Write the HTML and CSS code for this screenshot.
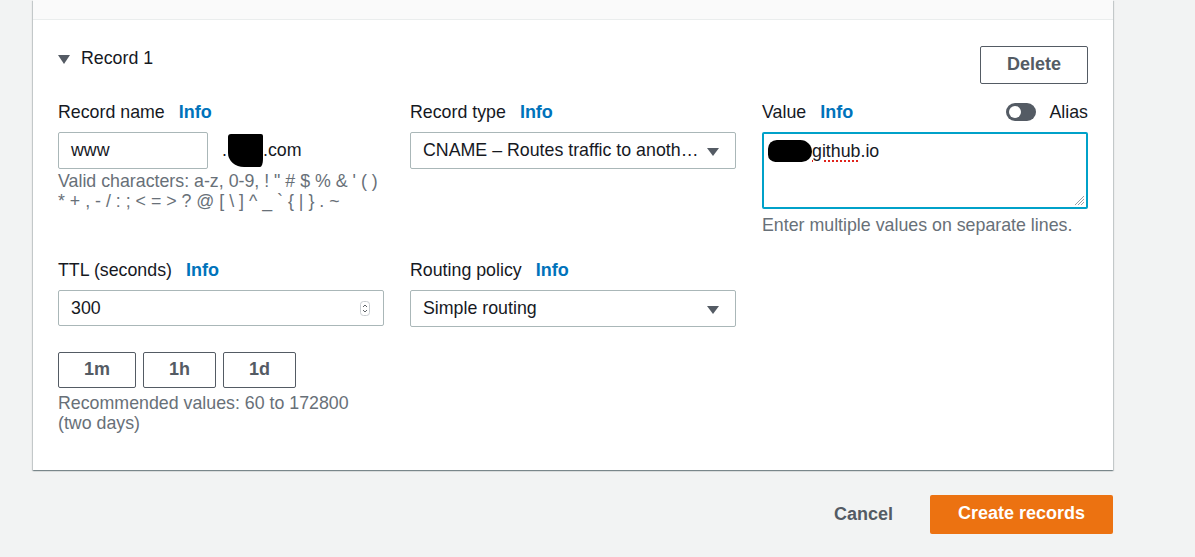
FILE: index.html
```html
<!DOCTYPE html>
<html lang="en">
<head>
<meta charset="utf-8">
<title>Create records</title>
<link rel="stylesheet" href="styles.css">
</head>
<body>
<div class="page">
  <section class="card">
    <div class="card-top"></div>
    <div class="record">
      <div class="record-head">
        <div class="expander"><span class="caret"></span><span class="record-title">Record 1</span></div>
        <button class="btn btn-delete">Delete</button>
      </div>

      <div class="fields">
        <div class="field">
          <div class="label-row"><span class="label">Record name</span><a class="info">Info</a></div>
          <div class="name-row">
            <div class="input name-input">www</div>
            <div class="domain">.<span class="redact redact-domain"></span>.com</div>
          </div>
          <div class="hint hint-name">Valid characters: a-z, 0-9, ! " # $ % &amp; ' ( )<br>* + , - / : ; &lt; = &gt; ? @ [ \ ] ^ _ ` { | } . ~</div>
        </div>

        <div class="field">
          <div class="label-row"><span class="label">Record type</span><a class="info">Info</a></div>
          <div class="input select">
            <span class="select-text">CNAME – Routes traffic to another domain name and to some AWS resources</span>
            <span class="tri"></span>
          </div>
        </div>

        <div class="field">
          <div class="label-row label-row-split">
            <div class="label-group"><span class="label">Value</span><a class="info">Info</a></div>
            <div class="alias"><span class="toggle"><span class="knob"></span></span><span class="label">Alias</span></div>
          </div>
          <div class="textarea">
            <span class="redact redact-value"></span><span class="misspelt">github</span>.io
            <svg class="grip" width="13" height="13" viewBox="0 0 13 13"><path d="M12 3 L3 12 M12 6 L6 12 M12 9 L9 12" stroke="#9aa0a6" stroke-width="1" fill="none"/></svg>
          </div>
          <div class="hint hint-value">Enter multiple values on separate lines.</div>
        </div>

        <div class="field">
          <div class="label-row"><span class="label">TTL (seconds)</span><a class="info">Info</a></div>
          <div class="input number">
            <span>300</span>
            <svg class="spin" width="10" height="15" viewBox="0 0 10 15"><rect x="0.5" y="0.5" width="9" height="14" rx="3" fill="#fff" stroke="#c9cdd1"/><path d="M3 6 L5 4 L7 6" stroke="#5f6368" stroke-width="1" fill="none"/><path d="M3 9 L5 11 L7 9" stroke="#5f6368" stroke-width="1" fill="none"/></svg>
          </div>
          <div class="quick">
            <button class="btn btn-quick">1m</button>
            <button class="btn btn-quick">1h</button>
            <button class="btn btn-quick">1d</button>
          </div>
          <div class="hint hint-ttl">Recommended values: 60 to 172800<br>(two days)</div>
        </div>

        <div class="field">
          <div class="label-row"><span class="label">Routing policy</span><a class="info">Info</a></div>
          <div class="input select">
            <span class="select-text">Simple routing</span>
            <span class="tri"></span>
          </div>
        </div>

        <div class="field"></div>
      </div>
    </div>
  </section>

  <div class="footer">
    <button class="link-btn">Cancel</button>
    <button class="btn-primary">Create records</button>
  </div>
</div>
</body>
</html>
```

FILE: styles.css
```css
* { box-sizing: border-box; }
html, body { margin: 0; padding: 0; }
body {
  background: #f2f3f3;
  font-family: "Liberation Sans", Arial, Helvetica, sans-serif;
  font-size: 17.8px;
  color: #16191f;
  width: 1195px;
  height: 557px;
  overflow: hidden;
}
.page { padding-left: 33px; width: 1113px; }

.card {
  background: #fff;
  box-shadow: 0 1px 1px 0 rgba(0, 28, 36, .3), 1px 1px 1px 0 rgba(0, 28, 36, .15), -1px 1px 1px 0 rgba(0, 28, 36, .15);
}
.card-top { height: 20px; background: #fafafa; border-bottom: 1px solid #eaeded; }
.record { padding: 26px 25px 37px; }

.record-head { display: flex; justify-content: space-between; align-items: flex-start; height: 38px; }
.expander { display: flex; align-items: center; height: 24px; line-height: 24px; }
.caret {
  width: 0; height: 0;
  border-left: 6.5px solid transparent;
  border-right: 6.5px solid transparent;
  border-top: 9px solid #545b64;
  margin: 2px 11px 0 0;
}

.btn {
  font-family: inherit;
  font-weight: 700;
  font-size: 18px;
  color: #545b64;
  background: #fff;
  border: 1px solid #545b64;
  border-radius: 2px;
  padding: 0;
  cursor: pointer;
}
.btn-delete { width: 108px; height: 38px; padding-bottom: 2px; }

.fields {
  margin-top: 16px;
  display: grid;
  grid-template-columns: repeat(3, minmax(0, 1fr));
  column-gap: 26px;
  row-gap: 23px;
}
.field { display: flex; flex-direction: column; align-items: stretch; min-width: 0; }

.label-row { display: flex; align-items: center; height: 24px; line-height: 24px; white-space: nowrap; }
.label-row-split { justify-content: space-between; }
.label-group { display: flex; align-items: center; }
.info { margin-left: 14px; color: #0073bb; font-weight: 700; font-size: 18px; }

.input {
  margin-top: 8px;
  height: 37px;
  border: 1px solid #aab7b8;
  border-radius: 2px;
  background: #fff;
  padding: 0 12px;
  display: flex;
  align-items: center;
  white-space: nowrap;
  min-width: 0;
}

.name-row { display: flex; align-items: center; }
.name-input { width: 150px; flex: none; }
.domain { margin: 8px 0 0 14px; display: flex; align-items: center; }

.redact { display: inline-block; background: #000; }
.redact-domain {
  width: 35px; height: 33px;
  border-radius: 3px 2px 3px 16px / 3px 2px 8px 14px;
  margin: 0 0 0 1px;
}
.redact-value {
  width: 44px; height: 22px;
  border-radius: 12px 16px 14px 10px;
  vertical-align: -5px;
}

.hint { color: #687078; line-height: 20px; white-space: nowrap; }
.hint-name { margin-top: 2px; }
.hint-value { margin-top: 6px; }
.hint-ttl { margin-top: 5px; }

.select { justify-content: space-between; padding: 0 16px 0 12px; }
.select-text { overflow: hidden; text-overflow: ellipsis; white-space: nowrap; margin-right: 6px; min-width: 0; }
.tri {
  flex: none;
  width: 0; height: 0;
  border-left: 6px solid transparent;
  border-right: 6px solid transparent;
  border-top: 8px solid #545b64;
  margin-top: 2px;
}

.alias { display: flex; align-items: center; }
.toggle {
  position: relative;
  width: 30px; height: 18px;
  border-radius: 9px;
  background: #545b64;
  margin-right: 13px;
}
.knob {
  position: absolute;
  left: 3px; top: 3px;
  width: 12px; height: 12px;
  border-radius: 50%;
  background: #fff;
}

.textarea {
  position: relative;
  margin-top: 8px;
  height: 77px;
  border: 2px solid #00a1c9;
  border-radius: 2px;
  padding: 6px 4px;
  line-height: 20px;
}
.misspelt {
  text-decoration: underline dotted #e0221b;
  text-decoration-thickness: 2px;
  text-underline-offset: 3px;
}
.grip { position: absolute; right: 1px; bottom: 1px; }

.number { height: 36px; justify-content: space-between; padding-right: 13px; }
.spin { flex: none; }

.quick { display: flex; gap: 7px; margin-top: 26px; }
.btn-quick { height: 36px; padding: 0 25px 1px; }

.footer {
  margin-top: 25px;
  display: flex;
  justify-content: flex-end;
  align-items: center;
}
.link-btn {
  font-family: inherit;
  font-size: 18px;
  font-weight: 700;
  color: #545b64;
  background: none;
  border: 0;
  padding: 0 0 1px;
  margin-right: 37px;
  cursor: pointer;
}
.btn-primary {
  font-family: inherit;
  font-size: 18px;
  font-weight: 700;
  color: #fff;
  background: #ec7211;
  border: 0;
  border-radius: 2px;
  width: 183px;
  height: 39px;
  padding: 0 0 2px;
  cursor: pointer;
}
```
